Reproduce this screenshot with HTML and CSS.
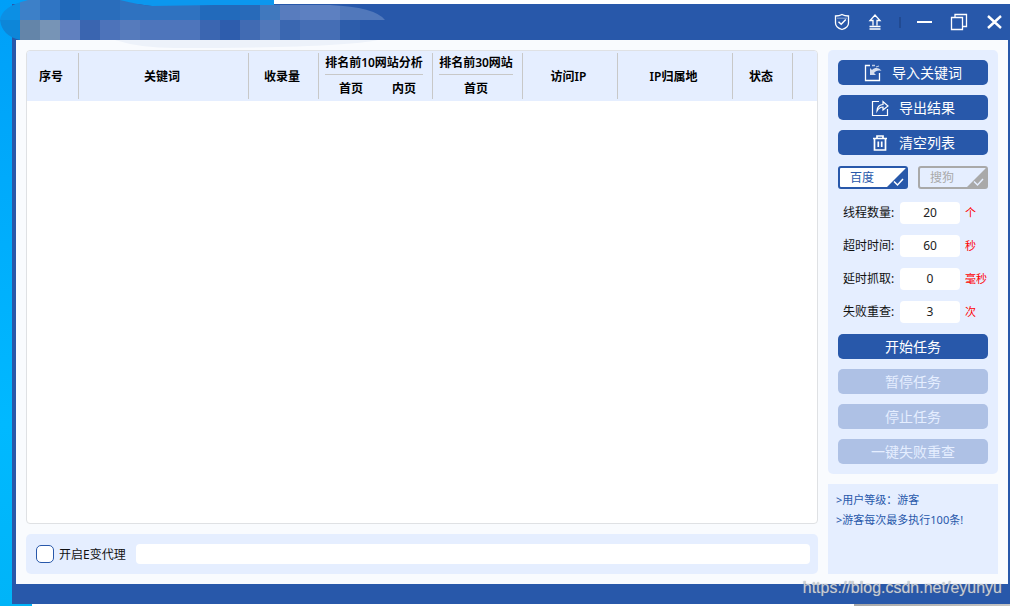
FILE: index.html
```html
<!DOCTYPE html>
<html lang="zh-CN">
<head>
<meta charset="utf-8">
<title>关键词排名</title>
<link rel="stylesheet" href="styles.css">
</head>
<body>
<div class="window">
  <header class="titlebar">
    <button class="tool" aria-label="安全"><svg width="16" height="18" viewBox="0 0 16 18" fill="none" stroke="currentColor" stroke-width="1.3"><path d="M8 1.5C6 2.7 4 3 1.500 3V10C1.500 13 4.500 15.500 8 16.500C11.500 15.500 14.500 13 14.500 10V3C12 3 10 2.700 8 1.500Z"/><path d="M3 5.200H13" stroke-width=".8" opacity=".6"/><path d="M4.500 8.800L7.200 11.300L11.800 6.500" stroke-width="1.500"/></svg></button>
    <button class="tool" aria-label="上传"><svg width="14" height="18" viewBox="0 0 14 18" fill="none" stroke="currentColor" stroke-width="1.300"><path d="M5 12.500V7.500H2L7 2L12 7.500H9V12.500M1.500 13.500H12.500M1.500 16H12.500"/></svg></button>
    <span class="divider"></span>
    <button class="tool" aria-label="最小化"><svg width="16" height="18" viewBox="0 0 16 18"><path d="M1 9H16" stroke="currentColor" stroke-width="2"/></svg></button>
    <button class="tool" aria-label="还原"><svg width="18" height="18" viewBox="0 0 18 18" fill="none" stroke="currentColor" stroke-width="1.300"><path d="M1.500 4.500H12.500V16.500H1.500ZM5 4V1.500H16.500V13.500H13"/></svg></button>
    <button class="tool" aria-label="关闭"><svg width="16" height="18" viewBox="0 0 16 18"><path d="M2 3L15 15M15 3L2 15" stroke="currentColor" stroke-width="2.400"/></svg></button>
  </header>
  <main class="content">
    <section class="left">
      <div class="results">
        <table>
          <colgroup><col class="w52"><col class="w170"><col class="w70"><col class="w60"><col class="w54"><col class="w90"><col class="w95"><col class="w115"><col class="w60"><col></colgroup>
          <thead>
            <tr>
              <th rowspan="2">序号</th>
              <th rowspan="2">关键词</th>
              <th rowspan="2">收录量</th>
              <th colspan="2" class="group"><span>排名前10网站分析</span></th>
              <th class="group"><span>排名前30网站</span></th>
              <th rowspan="2">访问IP</th>
              <th rowspan="2">IP归属地</th>
              <th rowspan="2">状态</th>
              <th rowspan="2" class="open"></th>
            </tr>
            <tr>
              <th class="sub open first">首页</th>
              <th class="sub">内页</th>
              <th class="sub">首页</th>
            </tr>
          </thead>
          <tbody></tbody>
        </table>
      </div>
      <div class="proxy">
        <input type="checkbox" id="proxy" class="check">
        <label for="proxy">开启E变代理</label>
        <input type="text" class="address" aria-label="代理地址">
      </div>
    </section>
    <aside class="side">
      <div class="panel">
        <div class="actions">
          <button class="btn"><svg width="18" height="18" viewBox="0 0 18 18" fill="none" stroke="currentColor" stroke-width="1.300"><path d="M6 1.500H1.500V16.500H15.500V9"/><path d="M6 4V11H12L10 9C11.500 7 14 6 17.500 7C15.500 3.500 11 3 8 6Z" fill="currentColor" stroke="none" opacity=".8"/><path d="M8 1.500H11M12 3L15 2" opacity=".7"/></svg>导入关键词</button>
          <button class="btn"><svg width="18" height="18" viewBox="0 0 18 18" fill="none" stroke="currentColor" stroke-width="1.200"><path d="M8 2.500H1.500V16.500H16.500V10"/><path d="M6 12C6 8 8.500 5.500 12 5.500V2.500L17 7L12 11V8C9 8 7.500 9.500 6 12Z"/></svg>导出结果</button>
          <button class="btn"><svg width="18" height="18" viewBox="0 0 18 18" fill="none" stroke="currentColor" stroke-width="1.700"><path d="M2 4.500H16M6 4V2H12V4M3.500 5V16H14.500V5M7.300 7.500V13M10.700 7.500V13"/></svg>清空列表</button>
        </div>
        <div class="engines">
          <button class="engine on">百度<svg width="20" height="20" viewBox="0 0 20 20"><path d="M20 0V20H0Z" fill="currentColor"/><path d="M8 13.500L11.500 17L17 11" fill="none" stroke="#fff" stroke-width="1.500"/></svg></button>
          <button class="engine">搜狗<svg width="20" height="20" viewBox="0 0 20 20"><path d="M20 0V20H0Z" fill="currentColor"/><path d="M8 13.500L11.500 17L17 11" fill="none" stroke="#e5eeff" stroke-width="1.500"/></svg></button>
        </div>
        <div class="fields">
          <div class="field"><label for="threads">线程数量:</label><input id="threads" type="text" value="20"><span>个</span></div>
          <div class="field"><label for="timeout">超时时间:</label><input id="timeout" type="text" value="60"><span>秒</span></div>
          <div class="field"><label for="delay">延时抓取:</label><input id="delay" type="text" value="0"><span>毫秒</span></div>
          <div class="field"><label for="retry">失败重查:</label><input id="retry" type="text" value="3"><span>次</span></div>
        </div>
        <div class="actions">
          <button class="btn">开始任务</button>
          <button class="btn" disabled>暂停任务</button>
          <button class="btn" disabled>停止任务</button>
          <button class="btn" disabled>一键失败重查</button>
        </div>
      </div>
      <div class="info">
        <p>&gt;用户等级：游客</p>
        <p>&gt;游客每次最多执行100条!</p>
      </div>
    </aside>
  </main>
</div>
<svg class="mosaic" width="390" height="50" viewBox="0 0 390 50" aria-hidden="true">
  <defs><clipPath id="blob"><path d="M0 20Q2 6 28 0H120Q140 5 152 6L215 5H330Q375 7 385 20H360V40H20Q2 36 0 20Z"/></clipPath></defs>
  <path fill="#0c97ee" d="M120 0H274V6H152Q140 5 120 0Z"/>
  <g clip-path="url(#blob)" shape-rendering="crispEdges">
    <path fill="#0c8fe4" d="M0 0h20v20H0z"/><path fill="#3d80c8" d="M20 0h20v20H20z"/><path fill="#2f75c4" d="M40 0h20v20H40z"/><path fill="#2069ba" d="M60 0h20v20H60z"/><path fill="#2a6dbb" d="M80 0h40v20H80z"/><path fill="#2f72c0" d="M120 0h80v20h-80z"/><path fill="#226abb" d="M200 0h40v20h-40z"/><path fill="#286ab9" d="M240 0h20v20h-20z"/><path fill="#4078be" d="M260 0h20v20h-20z"/><path fill="#587cbe" d="M280 0h20v20h-20z"/><path fill="#5d80c1" d="M300 0h40v20h-40z"/><path fill="#5178bb" d="M340 0h50v20h-50z"/>
    <path fill="#0d86d8" d="M0 20h20v20H0z"/><path fill="#6485a9" d="M20 20h20v20H20z"/><path fill="#7794b6" d="M40 20h20v20H40z"/><path fill="#6080bf" d="M60 20h20v20H60z"/><path fill="#3a65b0" d="M80 20h20v20H80z"/><path fill="#4d73ba" d="M100 20h20v20h-20z"/><path fill="#567bbc" d="M120 20h20v20h-20z"/><path fill="#4e75bb" d="M140 20h60v20h-60z"/><path fill="#3b66b1" d="M200 20h20v20h-20z"/><path fill="#2e5dad" d="M220 20h20v20h-20z"/><path fill="#416bb3" d="M240 20h20v20h-20z"/><path fill="#5178ba" d="M260 20h20v20h-20z"/><path fill="#3a67b1" d="M280 20h20v20h-20z"/><path fill="#456eb5" d="M300 20h40v20h-40z"/><path fill="#2d5dab" d="M340 20h20v20h-20z"/>
  </g>
  <path fill="#edf2fa" d="M115 40Q140 48 175 48Q340 48 378 40Z"/>
</svg>
<div class="watermark">https://blog.csdn.net/eyunyu</div>
</body>
</html>
```
FILE: styles.css
```css
* { box-sizing: border-box; }

body {
  margin: 0;
  min-height: 100vh;
  display: flex;
  position: relative;
  padding: 4px 0 2px 12px;
  background:
    linear-gradient(#fff, #fff) 274px 0 / 100% 4px no-repeat,
    linear-gradient(90deg, #fff 822px, #a8a8a8 822px, #c8c8c8) 32px 100% / 100% 2px no-repeat,
    linear-gradient(#009ff8, #00b9ff 70%, #00b4f8);
  font: 12px/16px "Noto Sans", "Noto Sans CJK SC", sans-serif;
  color: #111;
}

button, input { font: inherit; margin: 0; }
button { cursor: pointer; }

.window {
  flex: 1;
  min-width: 0;
  display: flex;
  flex-direction: column;
  background: #2858aa;
  padding: 0 2px 20px 4px;
}

.titlebar {
  height: 36px;
  display: flex;
  align-items: center;
  justify-content: flex-end;
  gap: 18px;
  padding-right: 6px;
}

.tool {
  display: flex;
  padding: 0;
  border: 0;
  background: none;
  color: #fff;
}

.divider { width: 2px; height: 11px; background: #214a92; margin: 0 -3px 0 -1px; }

.content {
  flex: 1;
  display: flex;
  gap: 10px;
  padding: 10px;
  background: #f9fbfe;
}

.left { flex: 1; min-width: 0; display: flex; flex-direction: column; gap: 10px; }

.results {
  flex: 1;
  background: #fff;
  border: 1px solid #dfe1e4;
  border-radius: 4px;
  overflow: hidden;
}

table { width: 100%; table-layout: fixed; border-collapse: collapse; }
thead { background: #e5eeff; }
tr { height: 25px; }

th {
  padding: 2px 4px 0 0;
  font-weight: 600;
  white-space: nowrap;
  color: #000;
  background: linear-gradient(#c8c8c8, #c8c8c8) 100% 50% / 1px calc(100% - 4px) no-repeat;
}

th.group { padding: 3px 4px 0 0; background-position: 100% 100%; background-size: 1px calc(100% - 2px); }
th.sub { padding-top: 0; background-position: 100% 0; background-size: 1px calc(100% - 2px); }
th.open { background: none; }
th.first { padding: 0 0 0 4px; }

.group span { display: block; width: max-content; margin: 0 auto; padding-bottom: 3px; border-bottom: 1px solid #c8c8c8; }

.w52 { width: 52px; }
.w54 { width: 54px; }
.w60 { width: 60px; }
.w70 { width: 70px; }
.w90 { width: 90px; }
.w95 { width: 95px; }
.w115 { width: 115px; }
.w170 { width: 170px; }

.proxy {
  height: 40px;
  display: flex;
  align-items: center;
  padding: 0 8px 0 10px;
  background: #e5eeff;
  border-radius: 5px;
}

.proxy label { padding-top: 2px; }

.check {
  appearance: none;
  width: 18px;
  height: 18px;
  margin-right: 5px;
  border: 1px solid #2858aa;
  border-radius: 5px;
  background: #fff;
}

.check:checked { background: #2858aa; }

.address {
  flex: 1;
  min-width: 0;
  height: 20px;
  margin-left: 10px;
  padding: 0 6px;
  border: 0;
  border-radius: 4px;
}

.side { width: 170px; display: flex; flex-direction: column; gap: 10px; }

.panel { padding: 10px; background: #e5eeff; border-radius: 5px; }

.actions { display: flex; flex-direction: column; gap: 10px; }

.btn {
  height: 25px;
  display: flex;
  align-items: center;
  justify-content: center;
  gap: 10px;
  padding: 0;
  border: 0;
  border-radius: 5px;
  background: #2858aa;
  color: #fff;
  font-size: 14px;
}

.btn:disabled { background: #aec1e5; color: #e5eeff; cursor: default; }

.engines { display: flex; gap: 10px; margin: 11px 0 13px; }

.engine {
  flex: 1;
  height: 23px;
  display: flex;
  align-items: center;
  justify-content: space-between;
  padding: 0 0 0 10px;
  border: 2px solid currentColor;
  border-radius: 3px;
  background: #e5eeff;
  color: #a9a9a9;
}

.engine.on { background: #fff; color: #2858aa; }

.fields { display: flex; flex-direction: column; gap: 11px; margin-bottom: 11px; }

.field { display: flex; align-items: center; padding-left: 5px; }
.field label { width: 57px; white-space: nowrap; }

.field input {
  width: 60px;
  height: 22px;
  padding: 0 0 2px;
  border: 0;
  border-radius: 4px;
  background: #fff;
  color: #222;
  text-align: center;
}

.field span { margin-left: 5px; font-size: 11px; color: #f00; }

.info {
  flex: 1;
  padding: 6px 8px;
  background: #e5eeff;
  color: #2858aa;
  font-size: 11px;
  line-height: 20px;
}

.info p { margin: 0; }

.mosaic { position: absolute; left: 0; top: 0; pointer-events: none; }

.watermark {
  position: absolute;
  right: 8px;
  bottom: 8px;
  font: 16px/20px "Liberation Sans", sans-serif;
  color: rgba(225, 230, 240, .8);
  text-shadow: 0 0 1px #777;
  pointer-events: none;
}
```
